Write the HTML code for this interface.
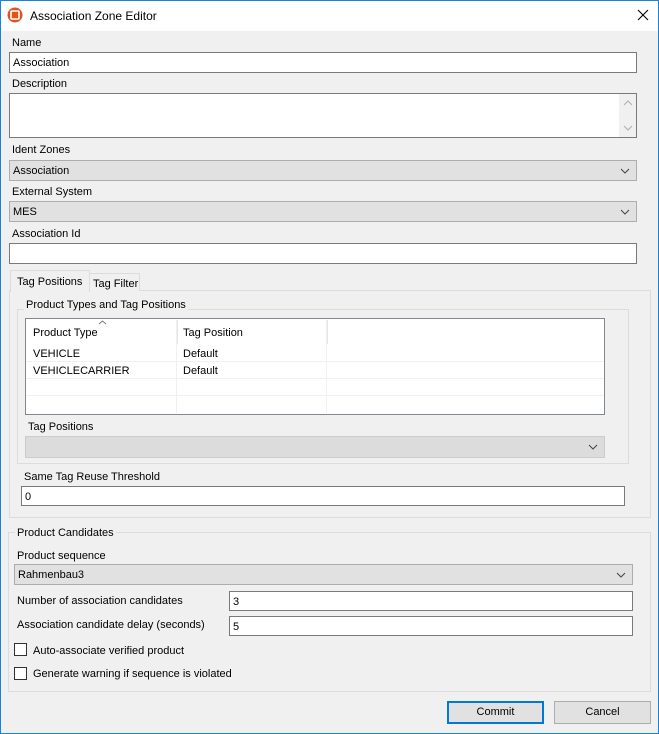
<!DOCTYPE html>
<html><head><meta charset="utf-8"><style>
*{box-sizing:border-box;margin:0;padding:0}
body{width:659px;height:734px;overflow:hidden;background:#f0f0f0;font-family:"Liberation Sans",sans-serif;font-size:11px;color:#000;position:relative}
.a{position:absolute}
.win{left:0;top:0;width:659px;height:734px;border:1px solid #1883d7;border-top:none}
.title{left:0;top:0;width:659px;height:31px;background:#fff;border-top:1px solid #1883d7}
.lbl{position:absolute;white-space:nowrap;line-height:14px}
.inp{position:absolute;background:#fff;border:1px solid #7a7a7a;padding:3px 3px 0;line-height:14px}
.cmb{position:absolute;background:#e1e1e1;border:1px solid #adadad;padding:3px 3px 0;line-height:14px}
.chev{position:absolute;right:6px;top:6px}
.grp{position:absolute;border:1px solid #dcdcdc}
.glbl{position:absolute;background:#f0f0f0;padding:0 2px;line-height:14px;white-space:nowrap}
.cb{position:absolute;width:13px;height:13px;border:1px solid #333;background:#fff}
.btn{position:absolute;background:#e1e1e1;border:1px solid #adadad;text-align:center;line-height:19px}
</style></head><body>
<div class="a title"></div>
<svg class="a" style="left:7px;top:7px" width="16" height="16" viewBox="0 0 16 16"><circle cx="8" cy="8" r="7.5" fill="#e0541c"/><rect x="4" y="4" width="8" height="8" rx="1" fill="none" stroke="#fff" stroke-width="1.6"/></svg>
<div class="lbl" style="left:30px;top:9px;font-size:12px">Association Zone Editor</div>
<svg class="a" style="left:637px;top:9px" width="12" height="12"><path d="M1 1L11 11M11 1L1 11" stroke="#000" stroke-width="1.1"/></svg>
<div class="a win"></div>

<div class="lbl" style="left:12px;top:36px">Name</div>
<div class="inp" style="left:9px;top:52px;width:628px;height:21px">Association</div>
<div class="lbl" style="left:12px;top:77px">Description</div>
<div class="inp" style="left:9px;top:93px;width:628px;height:45px"></div>
<div class="a" style="left:619px;top:94px;width:17px;height:43px;background:#f0f0f0"></div>
<svg class="a" style="left:623px;top:99px" width="10" height="34"><path d="M1 6L5 2L9 6M1 27L5 31L9 27" fill="none" stroke="#b4b4b4" stroke-width="1.2"/></svg>
<div class="lbl" style="left:12px;top:143px">Ident Zones</div>
<div class="cmb" style="left:9px;top:160px;width:628px;height:21px">Association<svg class="chev" width="10" height="8"><path d="M1 2L5 6L9 2" fill="none" stroke="#444"/></svg></div>
<div class="lbl" style="left:12px;top:185px">External System</div>
<div class="cmb" style="left:9px;top:201px;width:628px;height:21px">MES<svg class="chev" width="10" height="8"><path d="M1 2L5 6L9 2" fill="none" stroke="#444"/></svg></div>
<div class="lbl" style="left:12px;top:227px">Association Id</div>
<div class="inp" style="left:9px;top:243px;width:628px;height:21px"></div>

<div class="a" style="left:9px;top:290px;width:642px;height:228px;background:#fff;border:1px solid #dcdcdc"></div>
<div class="a" style="left:10px;top:291px;width:640px;height:226px;background:#f0f0f0"></div>
<div class="a" style="left:89px;top:273px;width:51px;height:18px;border:1px solid #dcdcdc;border-bottom:none;background:#f0f0f0"></div>
<div class="lbl" style="left:93px;top:277px">Tag Filter</div>
<div class="a" style="left:10px;top:270px;width:80px;height:22px;border:1px solid #dcdcdc;border-bottom:none;background:#f0f0f0"></div>
<div class="lbl" style="left:17px;top:275px">Tag Positions</div>

<div class="grp" style="left:17px;top:309px;width:612px;height:155px"></div>
<div class="glbl" style="left:24px;top:298px">Product Types and Tag Positions</div>
<div class="a" style="left:25px;top:318px;width:580px;height:97px;background:#fff;border:1px solid #828790"></div>
<div class="a" style="left:176px;top:320px;width:1px;height:93px;background:#f0f0f0"></div>
<div class="a" style="left:326px;top:320px;width:1px;height:93px;background:#f0f0f0"></div>
<div class="a" style="left:177px;top:320px;width:1px;height:24px;background:#e5e5e5"></div>
<div class="a" style="left:327px;top:320px;width:1px;height:24px;background:#e5e5e5"></div>
<div class="a" style="left:26px;top:361px;width:578px;height:1px;background:#f0f0f0"></div>
<div class="a" style="left:26px;top:378px;width:578px;height:1px;background:#f0f0f0"></div>
<div class="a" style="left:26px;top:395px;width:578px;height:1px;background:#f0f0f0"></div>
<svg class="a" style="left:98px;top:320px" width="9" height="5"><path d="M1 4L4.5 1L8 4" fill="none" stroke="#777"/></svg>
<div class="lbl" style="left:33px;top:326px">Product Type</div>
<div class="lbl" style="left:183px;top:326px">Tag Position</div>
<div class="lbl" style="left:33px;top:347px">VEHICLE</div>
<div class="lbl" style="left:183px;top:347px">Default</div>
<div class="lbl" style="left:33px;top:364px">VEHICLECARRIER</div>
<div class="lbl" style="left:183px;top:364px">Default</div>
<div class="lbl" style="left:28px;top:420px">Tag Positions</div>
<div class="cmb" style="left:25px;top:436px;width:580px;height:22px;border-color:#ccc;background:#dcdcdc"><svg class="chev" width="10" height="8"><path d="M1 2L5 6L9 2" fill="none" stroke="#444"/></svg></div>
<div class="lbl" style="left:24px;top:470px">Same Tag Reuse Threshold</div>
<div class="inp" style="left:21px;top:486px;width:604px;height:20px">0</div>

<div class="grp" style="left:8px;top:532px;width:643px;height:160px"></div>
<div class="glbl" style="left:15px;top:526px">Product Candidates</div>
<div class="lbl" style="left:17px;top:549px">Product sequence</div>
<div class="cmb" style="left:14px;top:564px;width:619px;height:21px">Rahmenbau3<svg class="chev" width="10" height="8"><path d="M1 2L5 6L9 2" fill="none" stroke="#444"/></svg></div>
<div class="lbl" style="left:17px;top:594px">Number of association candidates</div>
<div class="inp" style="left:229px;top:591px;width:404px;height:20px">3</div>
<div class="lbl" style="left:17px;top:618px">Association candidate delay (seconds)</div>
<div class="inp" style="left:229px;top:616px;width:404px;height:20px">5</div>
<div class="cb" style="left:14px;top:643px"></div>
<div class="lbl" style="left:33px;top:644px">Auto-associate verified product</div>
<div class="cb" style="left:14px;top:667px"></div>
<div class="lbl" style="left:33px;top:667px">Generate warning if sequence is violated</div>

<div class="btn" style="left:447px;top:701px;width:97px;height:23px;border:2px solid #0078d7;line-height:19px">Commit</div>
<div class="btn" style="left:554px;top:701px;width:97px;height:23px;line-height:21px">Cancel</div>
</body></html>
